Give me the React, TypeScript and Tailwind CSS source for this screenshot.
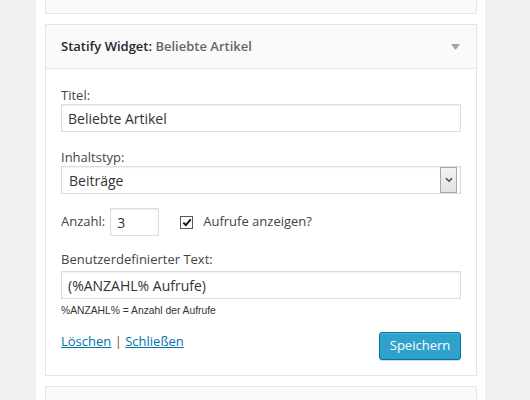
import React from 'react';

const font = { fontFamily: '"Open Sans", "Noto Sans", sans-serif' };

function TextField({ value }: { value: string }) {
  return (
    <div className="flex h-[28px] w-full items-center border border-[#dddddd] bg-white px-[6px] text-[14px] text-[#333333] shadow-[inset_0_1px_2px_rgba(0,0,0,0.07)]">
      {value}
    </div>
  );
}

export default function App() {
  return (
    <div className="min-h-[400px] h-[400px] overflow-hidden bg-[#f1f1f1]" style={font}>
      <div className="ml-[36px] h-full w-[449px] bg-white pl-[9px] pr-[8px]">
        {/* previous widget, cut off at the top */}
        <div className="h-[14px] w-[432px] border-x border-b border-[#e5e5e5] bg-[#fafafa]" />

        {/* Statify widget */}
        <div className="mt-[10px] w-[432px] border border-[#e5e5e5] bg-white">
          <div className="flex h-[44px] items-center justify-between border-b border-[#e5e5e5] bg-[#fafafa] pl-[15px] pr-[16px]">
            <div className="text-[13px] font-semibold text-[#23282d]">
              Statify Widget: <span className="text-[#666666]">Beliebte Artikel</span>
            </div>
            <svg width="9" height="6" viewBox="0 0 9 6" className="mt-[1px]">
              <path d="M0 0 L9 0 L4.5 6 Z" fill="#a0a5aa" />
            </svg>
          </div>

          <div className="px-[15px] pb-[15px] text-[13px] text-[#444444]">
            <label className="mt-[17px] block leading-[18px]">Titel:</label>
            <TextField value="Beliebte Artikel" />

            <label className="mt-[16px] block leading-[18px]">Inhaltstyp:</label>
            <div className="flex h-[28px] w-full items-center justify-between border border-[#dddddd] bg-white pl-[7px] pr-[3px] text-[14px] text-[#333333] shadow-[inset_0_1px_2px_rgba(0,0,0,0.07)]">
              <span>Beiträge</span>
              <div className="flex h-[26px] w-[17px] items-center justify-center border border-[#a9a9a9] bg-gradient-to-b from-[#f4f4f4] to-[#e3e3e3]">
                <svg width="8" height="6" viewBox="0 0 8 6">
                  <path d="M1 1.2 L4 4.2 L7 1.2" fill="none" stroke="#4a4a4a" strokeWidth="1.6" />
                </svg>
              </div>
            </div>

            <div className="mt-[14px] flex h-[28px] items-center">
              <span>Anzahl:</span>
              <div className="ml-[5px] flex h-[28px] w-[49px] items-center border border-[#dddddd] bg-white px-[6px] text-[14px] text-[#333333] shadow-[inset_0_1px_2px_rgba(0,0,0,0.07)]">
                3
              </div>
              <div className="ml-[21px] flex h-[13px] w-[13px] items-center justify-center border border-[#5a5a5a] bg-white">
                <svg width="10" height="9" viewBox="0 0 10 9">
                  <path d="M1.3 4.6 L3.8 7.1 L8.8 1.4" fill="none" stroke="#111111" strokeWidth="2" />
                </svg>
              </div>
              <span className="ml-[10px]">Aufrufe anzeigen?</span>
            </div>

            <label className="mt-[14px] block leading-[18px]">Benutzerdefinierter Text:</label>
            <div className="mt-[3px]">
              <TextField value="(%ANZAHL% Aufrufe)" />
            </div>

            <p
              className="mt-[5px] text-[10.3px] leading-[14px] text-[#333333]"
              style={{ fontFamily: '"Liberation Sans", Arial, sans-serif' }}
            >
              %ANZAHL% = Anzahl der Aufrufe
            </p>

            <div className="mt-[14px] flex items-start justify-between">
              <div className="leading-[18px]">
                <a href="#" className="text-[#0073aa] underline">Löschen</a>
                <span className="text-[#8a4a2a]"> | </span>
                <a href="#" className="text-[#0073aa] underline">Schließen</a>
              </div>
              <button className="h-[28px] w-[82px] rounded-[3px] border border-[#0074a2] bg-[#2ea2cc] pb-[1px] text-[13px] text-white shadow-[inset_0_1px_0_rgba(120,200,230,0.5),0_1px_0_rgba(0,0,0,0.15)]">
                Speichern
              </button>
            </div>
          </div>
        </div>

        {/* next widget */}
        <div className="mt-[10px] h-[40px] w-[432px] border border-[#e5e5e5] bg-[#fafafa]" />
      </div>
    </div>
  );
}
